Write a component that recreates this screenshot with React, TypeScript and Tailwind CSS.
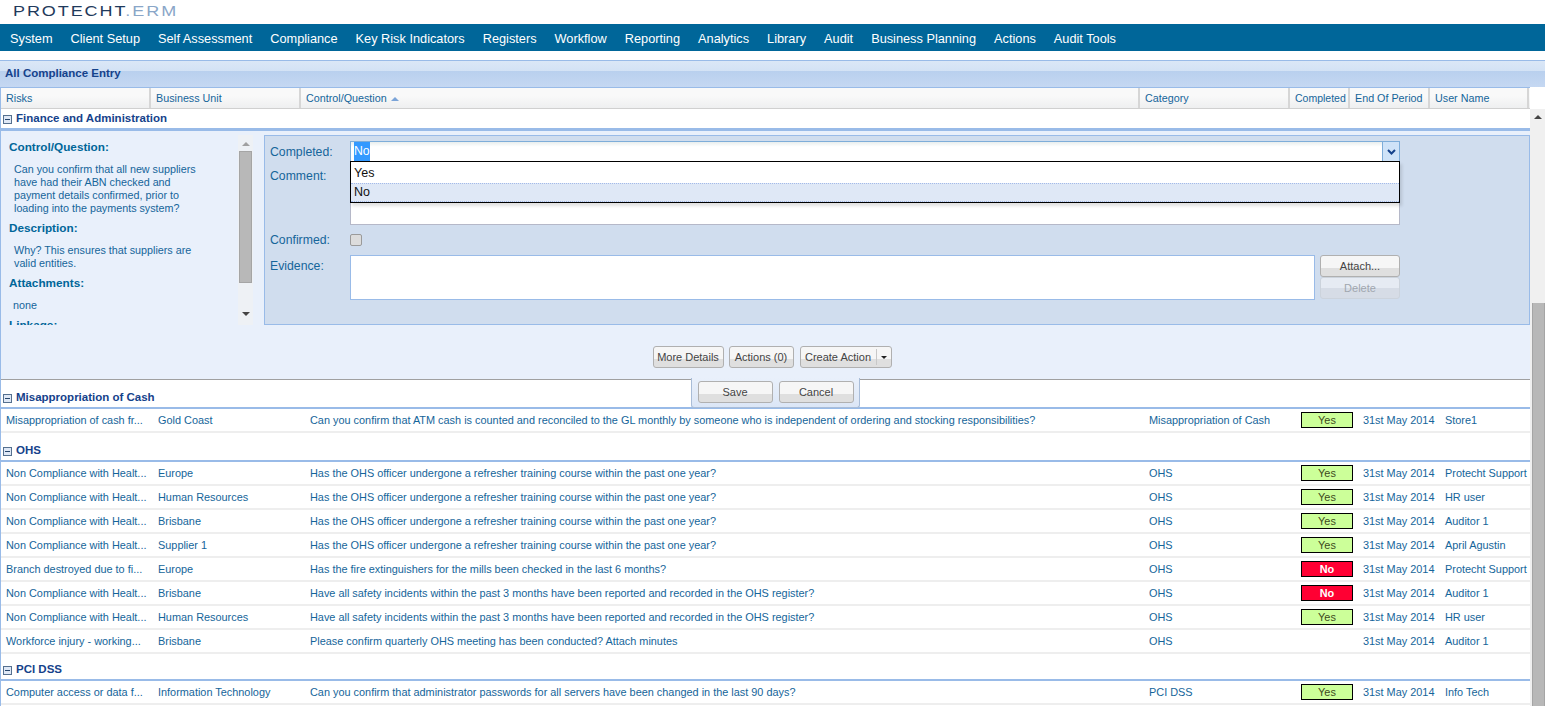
import React from 'react';

const navItems = ['System', 'Client Setup', 'Self Assessment', 'Compliance', 'Key Risk Indicators', 'Registers', 'Workflow', 'Reporting', 'Analytics', 'Library', 'Audit', 'Business Planning', 'Actions', 'Audit Tools'];

const OHS1 = 'Has the OHS officer undergone a refresher training course within the past one year?';
const OHS2 = 'Have all safety incidents within the past 3 months have been reported and recorded in the OHS register?';
const NC = 'Non Compliance with Healt...';

type Row = { risk: string; unit: string; q: string; cat: string; done?: 'Yes' | 'No'; user: string };

const ohsRows: Row[] = [
  { risk: NC, unit: 'Europe', q: OHS1, cat: 'OHS', done: 'Yes', user: 'Protecht Support' },
  { risk: NC, unit: 'Human Resources', q: OHS1, cat: 'OHS', done: 'Yes', user: 'HR user' },
  { risk: NC, unit: 'Brisbane', q: OHS1, cat: 'OHS', done: 'Yes', user: 'Auditor 1' },
  { risk: NC, unit: 'Supplier 1', q: OHS1, cat: 'OHS', done: 'Yes', user: 'April Agustin' },
  { risk: 'Branch destroyed due to fi...', unit: 'Europe', q: 'Has the fire extinguishers for the mills been checked in the last 6 months?', cat: 'OHS', done: 'No', user: 'Protecht Support' },
  { risk: NC, unit: 'Brisbane', q: OHS2, cat: 'OHS', done: 'No', user: 'Auditor 1' },
  { risk: NC, unit: 'Human Resources', q: OHS2, cat: 'OHS', done: 'Yes', user: 'HR user' },
  { risk: 'Workforce injury - working...', unit: 'Brisbane', q: 'Please confirm quarterly OHS meeting has been conducted? Attach minutes', cat: 'OHS', user: 'Auditor 1' },
];

const cashRow: Row = { risk: 'Misappropriation of cash fr...', unit: 'Gold Coast', q: 'Can you confirm that ATM cash is counted and reconciled to the GL monthly by someone who is independent of ordering and stocking responsibilities?', cat: 'Misappropriation of Cash', done: 'Yes', user: 'Store1' };
const pciRow: Row = { risk: 'Computer access or data f...', unit: 'Information Technology', q: 'Can you confirm that administrator passwords for all servers have been changed in the last 90 days?', cat: 'PCI DSS', done: 'Yes', user: 'Info Tech' };

const Minus = () => (
  <span className="flex h-[9px] w-[9px] items-center justify-center border border-[#55708f] bg-[#dfe8f6]">
    <span className="h-px w-[5px] bg-[#26456b]" />
  </span>
);

const GridRow = ({ r }: { r: Row }) => (
  <div className="flex h-[24px] items-center border-b-2 border-[#eeeeee] text-[10.9px] text-[#15659a]">
    <div className="w-[157px] whitespace-nowrap pl-[5px]">{r.risk}</div>
    <div className="w-[152px] whitespace-nowrap">{r.unit}</div>
    <div className="w-[839px] whitespace-nowrap">{r.q}</div>
    <div className="w-[152px] whitespace-nowrap">{r.cat}</div>
    <div className="w-[62px]">
      {r.done === 'Yes' && <div className="flex h-[16px] w-[52px] items-center justify-center border border-black bg-[#ccff99] text-[#3d4a20]">Yes</div>}
      {r.done === 'No' && <div className="flex h-[16px] w-[52px] items-center justify-center border border-black bg-[#ff0033] font-bold text-white">No</div>}
    </div>
    <div className="w-[82px] whitespace-nowrap">31st May 2014</div>
    <div className="whitespace-nowrap">{r.user}</div>
  </div>
);

const GroupHead = ({ title, className }: { title: string; className: string }) => (
  <div className={`flex items-end border-b-2 border-[#99bbe8] pb-[2px] pl-[2px] ${className}`}>
    <div className="flex h-[14px] items-center gap-[4px] text-[11.5px] font-bold text-[#15428b]">
      <Minus />
      {title}
    </div>
  </div>
);

const Btn = ({ label, className = '', disabled = false }: { label: string; className?: string; disabled?: boolean }) => (
  <button className={`flex h-[22px] items-center justify-center rounded-[3px] border text-[11px] ${disabled ? 'border-[#ccd3dc] bg-[linear-gradient(#e6ebf3_50%,#d6dce6_50%)] text-[#a0a6ae]' : 'border-[#b0b0b0] bg-[linear-gradient(#f6f6f6_58%,#dfdfdf_58%)] text-[#444444]'} ${className}`}>
    {label}
  </button>
);

const Th = ({ label, className }: { label: React.ReactNode; className: string }) => (
  <div className={`flex h-full items-center whitespace-nowrap border-r-2 border-[#d6d6d6] pl-[5px] pt-px ${className}`}>{label}</div>
);

export default function App() {
  return (
    <div className="relative h-[706px] w-[1545px] overflow-hidden bg-white font-['Liberation_Sans',sans-serif]">
      {/* logo */}
      <div className="flex h-[24px] items-center pb-[3px] pl-[13px] text-[15px] leading-none tracking-[1.6px] text-[#1f3a5c]">
        <span className="origin-left scale-x-[1.2] whitespace-nowrap">PROTECHT<span className="text-[#8aa6c8]">.ERM</span></span>
      </div>

      {/* main nav */}
      <div className="flex h-[27px] items-center gap-[18px] bg-[#006699] pl-[10px] pt-[2px] text-[12.75px] text-white">
        {navItems.map((n) => <span key={n} className="whitespace-nowrap">{n}</span>)}
      </div>

      {/* title bar */}
      <div className="mt-[9px] flex h-[27px] items-center border-t border-[#99bbe8] bg-[linear-gradient(#dbe7f7_0,#d3e2f5_38%,#b9d0ee_40%,#c5d8f2_100%)] pb-px pl-[5px] text-[11.5px] font-bold text-[#15428b]">
        All Compliance Entry
      </div>

      <div className="flex h-[619px]">
        <div className="w-[1530px] min-w-0 border-l border-[#99bbe8]">
          {/* column header */}
          <div className="flex h-[22px] border-y border-[#99bbe8] border-b-[#d0d0d0] bg-[linear-gradient(#f9f9f9_40%,#eeeff0)] text-[10.75px] text-[#15659a]">
            <Th label="Risks" className="w-[150px]" />
            <Th label="Business Unit" className="w-[150px]" />
            <Th label={<span className="flex items-center gap-[4px]">Control/Question <span className="h-0 w-0 border-x-[4px] border-b-[4px] border-x-transparent border-b-[#7ba4d8]" /></span>} className="w-[839px]" />
            <Th label="Category" className="w-[150px]" />
            <Th label="Completed" className="w-[60px] text-[10.5px]" />
            <Th label="End Of Period" className="w-[80px]" />
            <Th label="User Name" className="w-[99px]" />
          </div>

          <GroupHead title="Finance and Administration" className="h-[21px]" />

          {/* expanded editor */}
          <div className="h-[250px] border-b border-t border-[#99bbe8] border-b-[#a0a0a0] bg-[#e9f0fb] pt-[4px]">
            <div className="flex h-[190px]">
              <div className="h-[190px] w-[237px] overflow-hidden pl-[8px] text-[10.75px] leading-[13px] text-[#15659a]">
                <div className="mt-[5px] text-[11.75px] font-bold text-[#006699]">Control/Question:</div>
                <div className="mt-[10px] w-[190px] pl-[5px]">Can you confirm that all new suppliers have had their ABN checked and payment details confirmed, prior to loading into the payments system?</div>
                <div className="mt-[6px] text-[11.75px] font-bold text-[#006699]">Description:</div>
                <div className="mt-[10px] w-[190px] pl-[5px]">Why? This ensures that suppliers are valid entities.</div>
                <div className="mt-[6px] text-[11.75px] font-bold text-[#006699]">Attachments:</div>
                <div className="mt-[10px] pl-[4px]">none</div>
                <div className="mt-[6px] text-[11.75px] font-bold text-[#006699]">Linkage:</div>
              </div>

              <div className="flex h-[190px] w-[15px] flex-col items-center bg-[#eef1f5]">
                <span className="mt-[7px] h-0 w-0 border-x-[4px] border-b-[4px] border-x-transparent border-b-[#a0a0a0]" />
                <div className="mt-[5px] h-[132px] w-[13px] border border-[#a5a5a5] bg-[#b8b8b8]" />
                <span className="mt-[29px] h-0 w-0 border-x-[4px] border-t-[4px] border-x-transparent border-t-[#444444]" />
              </div>

              <div className="ml-[11px] h-[190px] flex-1 border border-[#99bbe8] bg-[#d0ddee] pl-[5px] pt-[5px] text-[12.25px] text-[#15659a]">
                <div className="flex h-[21px] items-center">
                  <div className="w-[80px] pt-[2px]">Completed:</div>
                  <div className="flex h-[21px] w-[1050px] items-center border border-[#7eadd9] bg-[linear-gradient(#e8eeee,#ffffff_25%)] pl-[3px] text-[#000]">
                    <span className="bg-[#3399ff] text-white">No</span>
                    <div className="ml-auto flex h-full w-[17px] items-center justify-center border-l border-[#7eadd9] bg-[#cfe3f8]">
                      <svg width="9" height="6" viewBox="0 0 9 6"><path d="M1 1l3.5 3.5L8 1" fill="none" stroke="#15428b" strokeWidth="2" /></svg>
                    </div>
                  </div>
                </div>
                <div className="mt-[2px] flex">
                  <div className="w-[80px] pt-[3px]">Comment:</div>
                  <div className="h-[61px] w-[1050px] border border-[#b5b8c8] bg-white" />
                </div>
                <div className="mt-[6px] flex h-[18px] items-center">
                  <div className="w-[80px]">Confirmed:</div>
                  <div className="h-[12px] w-[12px] rounded-[2px] border border-[#9a9a9a] bg-[#dcdcdc]" />
                </div>
                <div className="mt-[6px] flex">
                  <div className="w-[80px] pt-[2px]">Evidence:</div>
                  <div className="h-[45px] w-[965px] border border-[#99bbe8] bg-white" />
                  <div className="ml-[5px] flex flex-col">
                    <Btn label="Attach..." className="w-[80px]" />
                    <Btn label="Delete" disabled className="w-[80px]" />
                  </div>
                </div>
              </div>
            </div>

            <div className="mt-[21px] flex items-center justify-center gap-[5px] pl-[13px]">
              <Btn label="More Details" className="w-[71px] text-[10.75px]" />
              <Btn label="Actions (0)" className="w-[65px]" />
              <div className="ml-px flex h-[22px] w-[92px] items-center rounded-[3px] border border-[#b0b0b0] bg-[linear-gradient(#f6f6f6_58%,#dfdfdf_58%)] text-[11px] text-[#444444]">
                <span className="w-[76px] border-r border-[#c8c8c8] text-center">Create Action</span>
                <span className="ml-[4px] h-0 w-0 border-x-[3px] border-t-[3px] border-x-transparent border-t-[#222222]" />
              </div>
            </div>
          </div>

          {/* groups */}
          <div>
            <GroupHead title="Misappropriation of Cash" className="h-[29px]" />
            <GridRow r={cashRow} />
            <GroupHead title="OHS" className="h-[29px]" />
            {ohsRows.map((r, i) => <GridRow key={i} r={r} />)}
            <GroupHead title="PCI DSS" className="h-[27px]" />
            <GridRow r={pciRow} />
          </div>
        </div>

        {/* page scrollbar */}
        <div className="mt-[22px] flex w-[15px] flex-col items-center bg-[#f0f0f0]">
          <span className="mt-[6px] h-0 w-0 border-x-[4px] border-b-[4px] border-x-transparent border-b-[#444444]" />
          <div className="mt-[184px] w-[13px] flex-1 self-end border-x border-[#a5a5a5] bg-[#b8b8b8]" />
        </div>
      </div>

      {/* combo list */}
      <div className="absolute left-[350px] top-[161px] h-[42px] w-[1050px] border border-black bg-white pt-px text-[12.5px] text-[#111111] shadow-[2px_3px_3px_rgba(0,0,0,0.12)]">
        <div className="flex h-[20px] items-center pl-[3px]">Yes</div>
        <div className="flex h-[19px] items-center border-y border-dotted border-[#a3bae9] bg-[#dfe8f6] pl-[3px]">No</div>
      </div>

      {/* save / cancel tab */}
      <div className="absolute left-[691px] top-[378px] flex h-[30px] w-[169px] items-start justify-center gap-[6px] rounded-b-[3px] border-x border-b border-[#a9bdd8] bg-[linear-gradient(#e9f0fb,#dbe6f6)] pt-[3px]">
        <Btn label="Save" className="w-[75px]" />
        <Btn label="Cancel" className="w-[75px]" />
      </div>
    </div>
  );
}
